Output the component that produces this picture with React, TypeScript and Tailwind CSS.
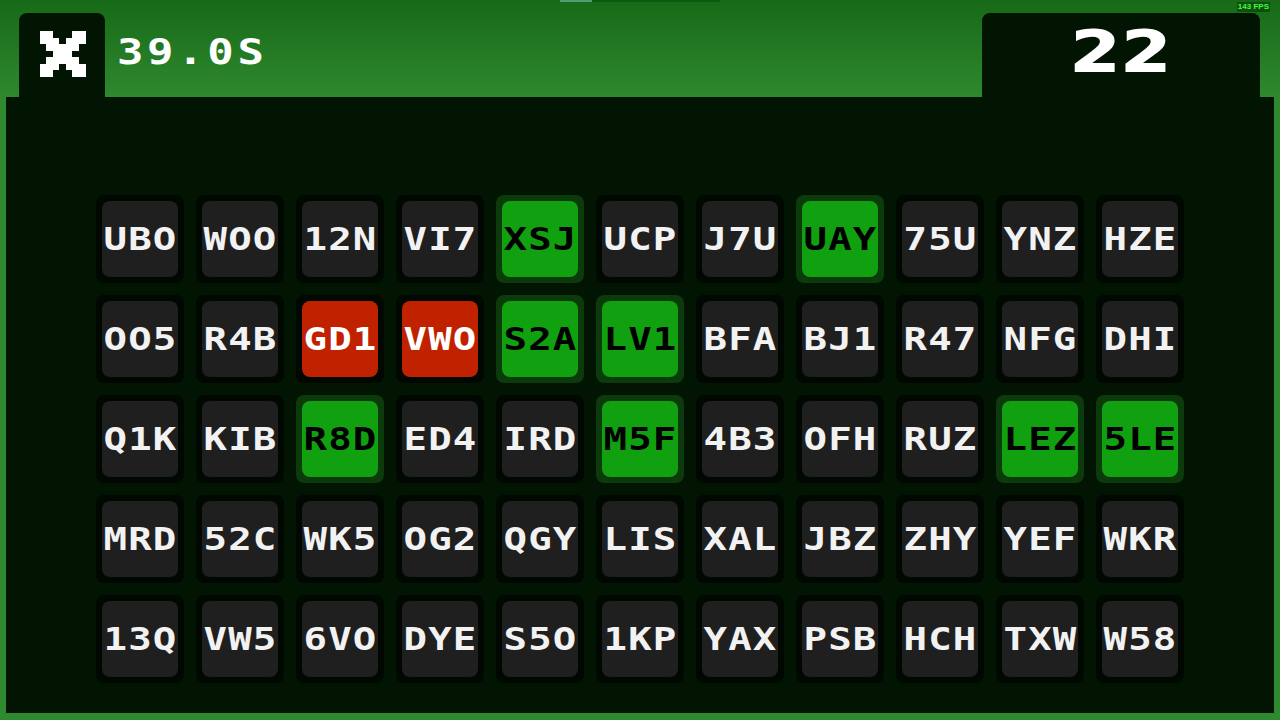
import React from "react";

type Tile = { code: string; state?: "hit" | "miss" };

const rows: Tile[][] = [
  ["UBO", "WOO", "12N", "VI7", "XSJ:h", "UCP", "J7U", "UAY:h", "75U", "YNZ", "HZE"],
  ["OO5", "R4B", "GD1:m", "VWO:m", "S2A:h", "LV1:h", "BFA", "BJ1", "R47", "NFG", "DHI"],
  ["Q1K", "KIB", "R8D:h", "ED4", "IRD", "M5F:h", "4B3", "OFH", "RUZ", "LEZ:h", "5LE:h"],
  ["MRD", "52C", "WK5", "OG2", "QGY", "LIS", "XAL", "JBZ", "ZHY", "YEF", "WKR"],
  ["13Q", "VW5", "6VO", "DYE", "S5O", "1KP", "YAX", "PSB", "HCH", "TXW", "W58"],
].map((row) =>
  row.map((s) => {
    const [code, flag] = s.split(":");
    return { code, state: flag === "h" ? "hit" : flag === "m" ? "miss" : undefined };
  })
);

const font = { fontFamily: '"DejaVu Sans Mono", "Liberation Mono", monospace' };

// pixel cross used as the "wrong" counter icon
const cross = [
  "XX...XX",
  "XXX.XXX",
  ".XXXXX.",
  "..XXX..",
  ".XXXXX.",
  "XXX.XXX",
  "XX...XX",
];

function PixelCross() {
  return (
    <svg width="47" height="46" viewBox="0 0 7 7" shapeRendering="crispEdges">
      {cross.map((line, y) =>
        line.split("").map((c, x) =>
          c === "X" ? <rect key={`${x}-${y}`} x={x} y={y} width="1" height="1" fill="#ffffff" /> : null
        )
      )}
    </svg>
  );
}

function TileCell({ tile }: { tile: Tile }) {
  const frame =
    tile.state === "hit" ? "bg-[#0b3a0b]" : "bg-[#010801]";
  const face =
    tile.state === "hit"
      ? "bg-[#10a010] text-black"
      : tile.state === "miss"
      ? "bg-[#c02200] text-white"
      : "bg-[#1f1f1f] text-[#f2f2f2]";
  return (
    <div className={`w-[88px] h-[88px] p-[6px] rounded-lg ${frame}`}>
      <div className={`w-full h-full rounded-lg flex items-center justify-center ${face}`}>
        <span
          className="text-[32px] font-bold leading-none tracking-[1px] scale-x-[1.22] pl-[1px]"
          style={font}
        >
          {tile.code}
        </span>
      </div>
    </div>
  );
}

export default function App() {
  return (
    <div className="relative w-[1280px] h-[720px] flex flex-col bg-linear-to-b from-[#176a17] to-[#2f8a2f] to-14% overflow-hidden">
      {/* round timer bar */}
      <div className="absolute top-0 left-[560px] w-[160px] h-[2px] bg-[#0e5a12]">
        <div className="w-[32px] h-full bg-[#4f9d72]" />
      </div>

      {/* fps counter */}
      <div className="absolute top-[2px] right-[10px] px-[1px] bg-[#0f4f10] text-[#3cff3c] text-[8px] leading-[10px] font-bold" style={{ fontFamily: '"Liberation Sans", Arial, sans-serif' }}>
        143 FPS
      </div>

      {/* header */}
      <div className="h-[97px] pt-[13px] flex items-stretch shrink-0">
        <div className="ml-[19px] w-[86px] rounded-t-lg bg-[#021402] flex items-center justify-center pb-[2px]">
          <PixelCross />
        </div>
        <div className="flex items-center pl-[12px] pb-[7px]">
          <span
            className="text-white text-[36px] font-bold leading-none tracking-[3px] scale-x-[1.22] origin-left"
            style={font}
          >
            39.0S
          </span>
        </div>
        <div className="flex-1" />
        <div className="mr-[20px] w-[278px] rounded-t-lg bg-[#021402] flex items-center justify-center pb-[7px]">
          <span
            className="text-white text-[55px] font-black leading-none tracking-[2px] scale-x-[1.45] pl-[2px]"
            style={{ ...font, WebkitTextStroke: "2px #ffffff" }}
          >
            22
          </span>
        </div>
      </div>

      {/* board */}
      <div className="mx-[6px] mb-[7px] flex-1 bg-[#021402] pt-[98px] flex justify-center">
        <div className="flex flex-col gap-[12px]">
          {rows.map((row, r) => (
            <div key={r} className="flex gap-[12px]">
              {row.map((t) => (
                <TileCell key={t.code} tile={t} />
              ))}
            </div>
          ))}
        </div>
      </div>
    </div>
  );
}
